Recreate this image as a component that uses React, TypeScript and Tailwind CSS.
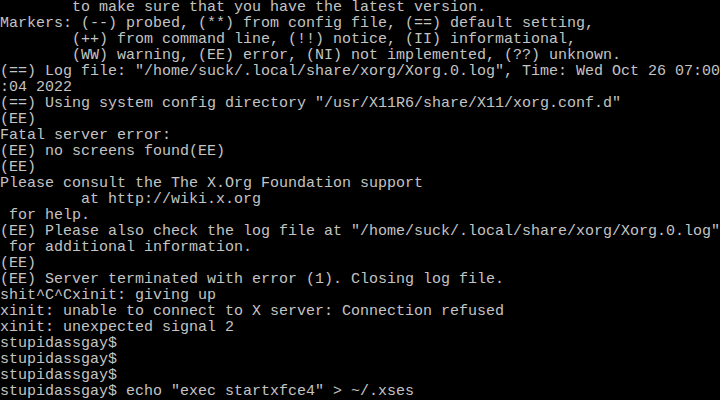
const lines = [
  "        to make sure that you have the latest version.",
  "Markers: (--) probed, (**) from config file, (==) default setting,",
  "        (++) from command line, (!!) notice, (II) informational,",
  "        (WW) warning, (EE) error, (NI) not implemented, (??) unknown.",
  '(==) Log file: "/home/suck/.local/share/xorg/Xorg.0.log", Time: Wed Oct 26 07:00',
  ":04 2022",
  '(==) Using system config directory "/usr/X11R6/share/X11/xorg.conf.d"',
  "(EE)",
  "Fatal server error:",
  "(EE) no screens found(EE)",
  "(EE)",
  "Please consult the The X.Org Foundation support",
  "         at http://wiki.x.org",
  " for help.",
  '(EE) Please also check the log file at "/home/suck/.local/share/xorg/Xorg.0.log"',
  " for additional information.",
  "(EE)",
  "(EE) Server terminated with error (1). Closing log file.",
  "shit^C^Cxinit: giving up",
  "xinit: unable to connect to X server: Connection refused",
  "xinit: unexpected signal 2",
  "stupidassgay$",
  "stupidassgay$",
  "stupidassgay$",
  'stupidassgay$ echo "exec startxfce4" > ~/.xses',
];

const App = () => {
  return (
    <div className="w-[720px] h-[400px] overflow-hidden bg-black text-[#c4c4c4] font-['Liberation_Mono',monospace] text-[15px] leading-[16px]">
      {lines.map((line, i) => (
        <div key={i} className="h-4 whitespace-pre">
          {line}
        </div>
      ))}
    </div>
  );
};

export default App;
